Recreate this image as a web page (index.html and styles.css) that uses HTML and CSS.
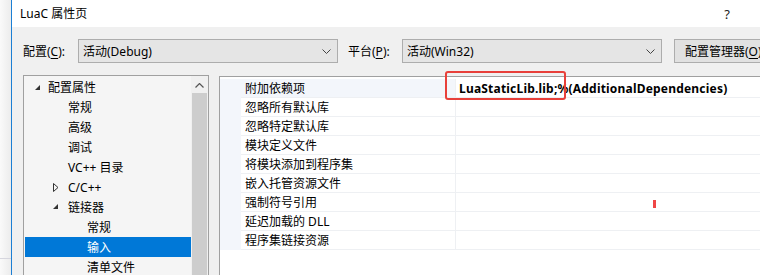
FILE: index.html
```html
<!DOCTYPE html>
<html lang="zh-CN">
<head>
  <meta charset="UTF-8" />
  <title>LuaC 属性页</title>
  <link rel="stylesheet" href="styles.css">
</head>
<body>
  <div class="screen">
    <div class="backdrop"><div class="backdrop-line"></div></div>

    <div class="dialog">
      <div class="titlebar">
        <span class="title">LuaC 属性页</span>
        <span class="help">?</span>
      </div>

      <div class="toolbar">
        <span class="field-label label-config">配置(<u>C</u>):</span>
        <div class="combo">
          <span>活动(Debug)</span>
          <svg class="chevron" width="9" height="5" viewBox="0 0 9 5"><polyline points="0.5,0.5 4.5,4.5 8.5,0.5" fill="none" stroke="#444" stroke-width="1"/></svg>
        </div>
        <span class="field-label label-platform">平台(<u>P</u>):</span>
        <div class="combo">
          <span>活动(Win32)</span>
          <svg class="chevron" width="9" height="5" viewBox="0 0 9 5"><polyline points="0.5,0.5 4.5,4.5 8.5,0.5" fill="none" stroke="#444" stroke-width="1"/></svg>
        </div>
        <div class="button">配置管理器(<u>O</u>)</div>
      </div>

      <div class="main">
        <div class="tree">
          <ul class="tree-list">
            <li class="tree-row level-0">
              <svg class="expander" width="6" height="6" viewBox="0 0 6 6"><polygon points="5,0 5,5 0,5" fill="#333"/></svg>配置属性
            </li>
            <li class="tree-row level-1">常规</li>
            <li class="tree-row level-1">高级</li>
            <li class="tree-row level-1">调试</li>
            <li class="tree-row level-1">VC++ 目录</li>
            <li class="tree-row level-1 has-children">
              <svg class="expander" width="6" height="9" viewBox="0 0 6 9"><polygon points="0.5,0.5 5,4.5 0.5,8.5" fill="none" stroke="#333" stroke-width="1"/></svg>C/C++
            </li>
            <li class="tree-row level-1 has-children">
              <svg class="expander" width="6" height="6" viewBox="0 0 6 6"><polygon points="5,0 5,5 0,5" fill="#333"/></svg>链接器
            </li>
            <li class="tree-row level-2">常规</li>
            <li class="tree-row level-2 selected">输入</li>
            <li class="tree-row level-2">清单文件</li>
          </ul>
          <div class="scrollbar">
            <svg class="scroll-up" width="9" height="5" viewBox="0 0 9 5"><polyline points="0.5,4.5 4.5,0.5 8.5,4.5" fill="none" stroke="#555" stroke-width="1.2"/></svg>
            <div class="thumb"></div>
          </div>
        </div>

        <div class="grid">
          <div class="props">
            <div class="prop-row current"><div class="cat"></div><div class="name">附加依赖项</div><div class="value"><b>LuaStaticLib.lib;%(AdditionalDependencies)</b></div></div>
            <div class="prop-row"><div class="cat"></div><div class="name">忽略所有默认库</div><div class="value"></div></div>
            <div class="prop-row"><div class="cat"></div><div class="name">忽略特定默认库</div><div class="value"></div></div>
            <div class="prop-row"><div class="cat"></div><div class="name">模块定义文件</div><div class="value"></div></div>
            <div class="prop-row"><div class="cat"></div><div class="name">将模块添加到程序集</div><div class="value"></div></div>
            <div class="prop-row"><div class="cat"></div><div class="name">嵌入托管资源文件</div><div class="value"></div></div>
            <div class="prop-row"><div class="cat"></div><div class="name">强制符号引用</div><div class="value"></div></div>
            <div class="prop-row"><div class="cat"></div><div class="name">延迟加载的 DLL</div><div class="value"></div></div>
            <div class="prop-row"><div class="cat"></div><div class="name">程序集链接资源</div><div class="value"></div></div>
          </div>
        </div>
      </div>
    </div>

    <div class="mark-box"></div>
    <div class="mark-tick"></div>
  </div>
</body>
</html>
```

FILE: styles.css
```css
* {
  margin: 0;
  padding: 0;
  box-sizing: border-box;
}

body {
  font-family: "Noto Sans", "Noto Sans CJK SC", sans-serif;
  font-size: 12px;
  color: #000;
  background-color: #f0f0f0;
}

u {
  text-decoration: underline;
  text-underline-offset: 2px;
}

.screen {
  position: relative;
  display: flex;
  width: 760px;
  height: 275px;
  overflow: hidden;
}

.backdrop {
  width: 11px;
  flex-shrink: 0;
  background: linear-gradient(to right, #fafafa, #ececec);
  padding-top: 258px;
}

.backdrop-line {
  height: 1px;
  background-color: #d6d6de;
}

.dialog {
  flex: 1;
  min-width: 0;
  border-left: 1px solid #1c7fd4;
  background-color: #f0f0f0;
}

/* title bar */

.titlebar {
  display: flex;
  align-items: center;
  height: 27px;
  padding: 0 30px 0 8px;
  background-color: #ffffff;
}

.title {
  font-size: 12px;
  line-height: 1;
}

.help {
  margin-left: auto;
  font-size: 13px;
  color: #222;
}

/* config row */

.toolbar {
  display: flex;
  align-items: center;
  height: 24px;
  margin-top: 12px;
  padding-left: 11px;
  white-space: nowrap;
}

.field-label {
  flex-shrink: 0;
}

.label-config {
  width: 55px;
}

.label-platform {
  width: 54px;
  margin-left: 10px;
}

.combo {
  display: flex;
  align-items: center;
  justify-content: space-between;
  flex-shrink: 0;
  width: 260px;
  height: 24px;
  padding: 0 5px 0 4px;
  background-color: #e5e5e5;
  border: 1px solid #adadad;
}

.chevron {
  margin-right: 1px;
}

.button {
  flex-shrink: 0;
  display: flex;
  align-items: center;
  height: 24px;
  width: 120px;
  margin-left: 12px;
  padding-left: 10px;
  background-color: #e1e1e1;
  border: 1px solid #adadad;
}

/* lower panes */

.main {
  display: flex;
  align-items: flex-start;
  margin-top: 12px;
  padding-left: 11px;
}

.tree {
  display: flex;
  flex-shrink: 0;
  width: 186px;
  height: 230px;
  background-color: #f5f5f5;
  border: 1px solid #a0a0a0;
}

.tree-list {
  list-style: none;
  width: 167px;
  padding: 1px 0 0 1px;
}

.tree-row {
  display: flex;
  align-items: center;
  height: 20px;
  white-space: nowrap;
}

.tree-row.level-0 {
  padding-left: 10px;
}

.tree-row.level-0 .expander {
  margin-right: 7px;
  margin-top: 1px;
}

.tree-row.level-1 {
  padding-left: 43px;
}

.tree-row.level-1.has-children {
  padding-left: 28px;
}

.tree-row.level-1 .expander {
  margin-right: 9px;
}

.tree-row.level-2 {
  padding-left: 62px;
}

.tree-row.selected {
  background-color: #0078d7;
  color: #ffffff;
}

.scrollbar {
  display: flex;
  flex-direction: column;
  align-items: center;
  width: 17px;
  background-color: #f0f0f0;
}

.scroll-up {
  margin-top: 7px;
  margin-bottom: 5px;
}

.thumb {
  flex: 1;
  width: 15px;
  background-color: #cdcdcd;
}

/* property grid */

.grid {
  flex: 1;
  min-width: 0;
  height: 230px;
  margin-top: 1px;
  margin-left: 10px;
  padding-top: 2px;
  background-color: #ffffff;
  border: 1px solid #a0a0a0;
  border-right: none;
}

.prop-row {
  display: flex;
  height: 19px;
  white-space: nowrap;
}

.cat {
  width: 21px;
  flex-shrink: 0;
  background-color: #f3f6fb;
}

.name {
  width: 215px;
  flex-shrink: 0;
  padding-left: 4px;
  line-height: 19px;
  border-bottom: 1px solid #eef0f3;
  border-right: 1px solid #eef0f3;
}

.value {
  flex: 1;
  padding-left: 3px;
  line-height: 19px;
  border-bottom: 1px solid #eef0f3;
}

.prop-row.current .name {
  background-color: #f3f6fb;
}

.value b {
  font-weight: 700;
  letter-spacing: 0.2px;
}

/* red annotation marks drawn over the screenshot */

.mark-box {
  position: absolute;
  left: 445px;
  top: 71px;
  width: 121px;
  height: 29px;
  border: 2px solid #e8403a;
  border-radius: 3px;
}

.mark-tick {
  position: absolute;
  left: 653px;
  top: 200px;
  width: 3px;
  height: 8px;
  background-color: #ef4646;
}
```
